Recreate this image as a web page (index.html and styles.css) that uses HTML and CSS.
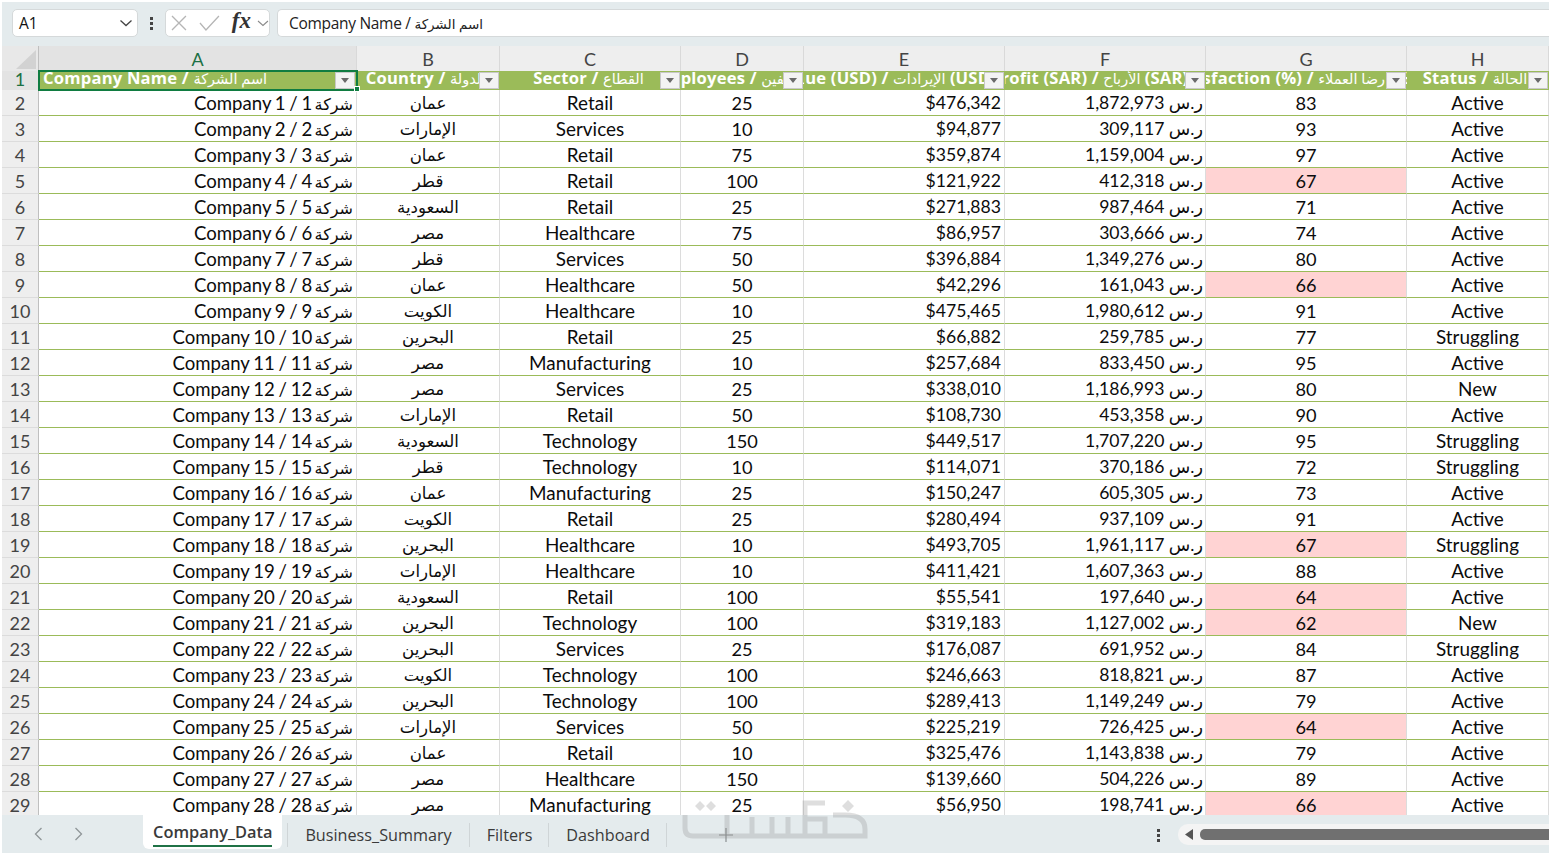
FILE: index.html
```html
<!DOCTYPE html>
<html lang="en">
<head>
<meta charset="utf-8">
<title>Company_Data</title>
<link rel="stylesheet" href="styles.css">
</head>
<body>
<div class="app">
  <div class="toolbar">
    <div class="namebox"><span>A1</span>
      <svg class="chev" width="14" height="8" viewBox="0 0 14 8"><path d="M1.500 1.500 7 6.500l5.500-5" fill="none" stroke="#444" stroke-width="1.300"/></svg>
    </div>
    <div class="vdots"><i></i><i></i><i></i></div>
    <div class="fnbox">
      <svg width="18" height="18" viewBox="0 0 18 18"><path d="M2 2l14 14M16 2 2 16" fill="none" stroke="#b5b5b5" stroke-width="1.300"/></svg>
      <svg width="22" height="18" viewBox="0 0 22 18"><path d="M2 9l6 7L21 2" fill="none" stroke="#b5b5b5" stroke-width="1.300"/></svg>
      <span class="fx">fx</span>
      <svg width="12" height="7" viewBox="0 0 12 7"><path d="M1 1l5 4.500 5-4.500" fill="none" stroke="#8a8a8a" stroke-width="1.100"/></svg>
    </div>
    <div class="formula">Company Name / <span class="far">اسم الشركة</span></div>
  </div>

  <div class="sheet">
    <table class="grid">
      <colgroup>
        <col class="c-h"><col class="c-a"><col class="c-b"><col class="c-c"><col class="c-d"><col class="c-e"><col class="c-f"><col class="c-g"><col class="c-h2">
      </colgroup>
      <thead>
        <tr class="letters">
          <th class="corner"><svg width="34" height="23" viewBox="0 0 34 23"><path d="M33 2v19H13z" fill="#d2d2d2"/></svg></th>
          <th class="on">A</th><th>B</th><th>C</th><th>D</th><th>E</th><th>F</th><th>G</th><th>H</th>
        </tr>
      </thead>
      <tbody>
        <tr class="hdr">
          <th>1</th>
          <td class="sel"><div class="hc left"><span>Company Name / <i>اسم الشركة</i></span></div><b class="filter"></b><b class="handle"></b></td>
          <td><div class="hc"><span class="nudge-b">Country / <i>الدولة</i></span></div><b class="filter"></b></td>
          <td><div class="hc"><span class="nudge-c">Sector / <i>القطاع</i></span></div><b class="filter"></b></td>
          <td><div class="hc"><span class="nudge-d">Employees / <i>عدد الموظفين</i></span></div><b class="filter"></b></td>
          <td><div class="hc"><span class="nudge-e">Revenue (USD) / <i>الإيرادات</i> (USD)</span></div><b class="filter"></b></td>
          <td><div class="hc"><span class="nudge-f">Profit (SAR) / <i>الأرباح</i> (SAR)</span></div><b class="filter"></b></td>
          <td><div class="hc"><span class="nudge-g">Customer Satisfaction (%) / <i>رضا العملاء</i> (%)</span></div><b class="filter"></b></td>
          <td><div class="hc"><span class="nudge-b">Status / <i>الحالة</i></span></div><b class="filter"></b></td>
        </tr>
        <tr><th>2</th><td class="r">Company 1 / <i>شركة</i> 1</td><td>عمان</td><td>Retail</td><td>25</td><td class="r">$476,342</td><td class="r">1,872,973 <i>ر.س</i></td><td>83</td><td>Active</td></tr>
        <tr><th>3</th><td class="r">Company 2 / <i>شركة</i> 2</td><td>الإمارات</td><td>Services</td><td>10</td><td class="r">$94,877</td><td class="r">309,117 <i>ر.س</i></td><td>93</td><td>Active</td></tr>
        <tr><th>4</th><td class="r">Company 3 / <i>شركة</i> 3</td><td>عمان</td><td>Retail</td><td>75</td><td class="r">$359,874</td><td class="r">1,159,004 <i>ر.س</i></td><td>97</td><td>Active</td></tr>
        <tr><th>5</th><td class="r">Company 4 / <i>شركة</i> 4</td><td>قطر</td><td>Retail</td><td>100</td><td class="r">$121,922</td><td class="r">412,318 <i>ر.س</i></td><td class="low">67</td><td>Active</td></tr>
        <tr><th>6</th><td class="r">Company 5 / <i>شركة</i> 5</td><td>السعودية</td><td>Retail</td><td>25</td><td class="r">$271,883</td><td class="r">987,464 <i>ر.س</i></td><td>71</td><td>Active</td></tr>
        <tr><th>7</th><td class="r">Company 6 / <i>شركة</i> 6</td><td>مصر</td><td>Healthcare</td><td>75</td><td class="r">$86,957</td><td class="r">303,666 <i>ر.س</i></td><td>74</td><td>Active</td></tr>
        <tr><th>8</th><td class="r">Company 7 / <i>شركة</i> 7</td><td>قطر</td><td>Services</td><td>50</td><td class="r">$396,884</td><td class="r">1,349,276 <i>ر.س</i></td><td>80</td><td>Active</td></tr>
        <tr><th>9</th><td class="r">Company 8 / <i>شركة</i> 8</td><td>عمان</td><td>Healthcare</td><td>50</td><td class="r">$42,296</td><td class="r">161,043 <i>ر.س</i></td><td class="low">66</td><td>Active</td></tr>
        <tr><th>10</th><td class="r">Company 9 / <i>شركة</i> 9</td><td>الكويت</td><td>Healthcare</td><td>10</td><td class="r">$475,465</td><td class="r">1,980,612 <i>ر.س</i></td><td>91</td><td>Active</td></tr>
        <tr><th>11</th><td class="r">Company 10 / <i>شركة</i> 10</td><td>البحرين</td><td>Retail</td><td>25</td><td class="r">$66,882</td><td class="r">259,785 <i>ر.س</i></td><td>77</td><td>Struggling</td></tr>
        <tr><th>12</th><td class="r">Company 11 / <i>شركة</i> 11</td><td>مصر</td><td>Manufacturing</td><td>10</td><td class="r">$257,684</td><td class="r">833,450 <i>ر.س</i></td><td>95</td><td>Active</td></tr>
        <tr><th>13</th><td class="r">Company 12 / <i>شركة</i> 12</td><td>مصر</td><td>Services</td><td>25</td><td class="r">$338,010</td><td class="r">1,186,993 <i>ر.س</i></td><td>80</td><td>New</td></tr>
        <tr><th>14</th><td class="r">Company 13 / <i>شركة</i> 13</td><td>الإمارات</td><td>Retail</td><td>50</td><td class="r">$108,730</td><td class="r">453,358 <i>ر.س</i></td><td>90</td><td>Active</td></tr>
        <tr><th>15</th><td class="r">Company 14 / <i>شركة</i> 14</td><td>السعودية</td><td>Technology</td><td>150</td><td class="r">$449,517</td><td class="r">1,707,220 <i>ر.س</i></td><td>95</td><td>Struggling</td></tr>
        <tr><th>16</th><td class="r">Company 15 / <i>شركة</i> 15</td><td>قطر</td><td>Technology</td><td>10</td><td class="r">$114,071</td><td class="r">370,186 <i>ر.س</i></td><td>72</td><td>Struggling</td></tr>
        <tr><th>17</th><td class="r">Company 16 / <i>شركة</i> 16</td><td>عمان</td><td>Manufacturing</td><td>25</td><td class="r">$150,247</td><td class="r">605,305 <i>ر.س</i></td><td>73</td><td>Active</td></tr>
        <tr><th>18</th><td class="r">Company 17 / <i>شركة</i> 17</td><td>الكويت</td><td>Retail</td><td>25</td><td class="r">$280,494</td><td class="r">937,109 <i>ر.س</i></td><td>91</td><td>Active</td></tr>
        <tr><th>19</th><td class="r">Company 18 / <i>شركة</i> 18</td><td>البحرين</td><td>Healthcare</td><td>10</td><td class="r">$493,705</td><td class="r">1,961,117 <i>ر.س</i></td><td class="low">67</td><td>Struggling</td></tr>
        <tr><th>20</th><td class="r">Company 19 / <i>شركة</i> 19</td><td>الإمارات</td><td>Healthcare</td><td>10</td><td class="r">$411,421</td><td class="r">1,607,363 <i>ر.س</i></td><td>88</td><td>Active</td></tr>
        <tr><th>21</th><td class="r">Company 20 / <i>شركة</i> 20</td><td>السعودية</td><td>Retail</td><td>100</td><td class="r">$55,541</td><td class="r">197,640 <i>ر.س</i></td><td class="low">64</td><td>Active</td></tr>
        <tr><th>22</th><td class="r">Company 21 / <i>شركة</i> 21</td><td>البحرين</td><td>Technology</td><td>100</td><td class="r">$319,183</td><td class="r">1,127,002 <i>ر.س</i></td><td class="low">62</td><td>New</td></tr>
        <tr><th>23</th><td class="r">Company 22 / <i>شركة</i> 22</td><td>البحرين</td><td>Services</td><td>25</td><td class="r">$176,087</td><td class="r">691,952 <i>ر.س</i></td><td>84</td><td>Struggling</td></tr>
        <tr><th>24</th><td class="r">Company 23 / <i>شركة</i> 23</td><td>الكويت</td><td>Technology</td><td>100</td><td class="r">$246,663</td><td class="r">818,821 <i>ر.س</i></td><td>87</td><td>Active</td></tr>
        <tr><th>25</th><td class="r">Company 24 / <i>شركة</i> 24</td><td>البحرين</td><td>Technology</td><td>100</td><td class="r">$289,413</td><td class="r">1,149,249 <i>ر.س</i></td><td>79</td><td>Active</td></tr>
        <tr><th>26</th><td class="r">Company 25 / <i>شركة</i> 25</td><td>الإمارات</td><td>Services</td><td>50</td><td class="r">$225,219</td><td class="r">726,425 <i>ر.س</i></td><td class="low">64</td><td>Active</td></tr>
        <tr><th>27</th><td class="r">Company 26 / <i>شركة</i> 26</td><td>عمان</td><td>Retail</td><td>10</td><td class="r">$325,476</td><td class="r">1,143,838 <i>ر.س</i></td><td>79</td><td>Active</td></tr>
        <tr><th>28</th><td class="r">Company 27 / <i>شركة</i> 27</td><td>مصر</td><td>Healthcare</td><td>150</td><td class="r">$139,660</td><td class="r">504,226 <i>ر.س</i></td><td>89</td><td>Active</td></tr>
        <tr><th>29</th><td class="r">Company 28 / <i>شركة</i> 28</td><td>مصر</td><td>Manufacturing</td><td>25</td><td class="r">$56,950</td><td class="r">198,741 <i>ر.س</i></td><td class="low">66</td><td>Active</td></tr>
      </tbody>
    </table>
  </div>

  <div class="tabbar">
    <div class="nav">
      <svg width="9" height="14" viewBox="0 0 9 14"><path d="M7.500 1 1.500 7l6 6" fill="none" stroke="#8f9698" stroke-width="1.300"/></svg>
      <svg width="9" height="14" viewBox="0 0 9 14"><path d="M1.500 1l6 6-6 6" fill="none" stroke="#8f9698" stroke-width="1.300"/></svg>
    </div>
    <div class="tab active"><span>Company_Data</span></div>
    <div class="tab first">Business_Summary</div>
    <div class="tab">Filters</div>
    <div class="tab">Dashboard</div>
    <div class="plus"><svg width="16" height="16" viewBox="0 0 16 16"><path d="M8 1v14M1 8h14" stroke="#8a8f91" stroke-width="1.200"/></svg></div>
    <div class="spacer"></div>
    <div class="vdots tabdots"><i></i><i></i><i></i></div>
    <div class="scroll">
      <svg width="9" height="11" viewBox="0 0 9 11"><path d="M8 0v11L0 5.500z" fill="#555"/></svg>
      <div class="thumb"></div>
    </div>
  </div>

  <svg class="mark" width="205" height="50" viewBox="0 0 205 50">
    <path d="M25 6l5 5-5 5-5-5zM36 6l5 5-5 5-5-5zM173 5l6 6-6 6-6-6z" fill="#8d8d8d"/>
    <path d="M10 20v13q0 8 8 8h172v-7q0-14-20-14h-12M52 20v21M77 22v19M97 22v19M113 22v19M130 41V8h20M130 24h20v17" fill="none" stroke="#8d8d8d" stroke-width="5"/>
  </svg>
</div>
</body>
</html>
```

FILE: styles.css
```css
* { box-sizing: border-box; }
html, body { margin: 0; height: 100%; background: #fff; overflow: hidden; }
body { padding: 2px 3px 2px 2px; font-family: Lato, "DejaVu Sans", sans-serif; }
i { font-style: normal; }

.app { position: relative; display: flex; flex-direction: column; height: 851px; width: 1547px; overflow: hidden; background: #e4ebed; }

.toolbar { flex: 0 0 44px; display: flex; align-items: flex-start; padding: 7px 0 0 10px; background: #e4ebed; }
.namebox { width: 126px; height: 28px; background: #fff; border: 1px solid #d5d9da; border-radius: 5px; display: flex; align-items: center; justify-content: space-between; padding: 0 4px 0 6px; font: 15.5px "Open Sans", sans-serif; color: #111; }
.vdots { display: flex; flex-direction: column; gap: 2px; margin: 8px 12px 0; }
.vdots i { display: block; width: 3px; height: 3px; background: #444; }
.fnbox { width: 105px; height: 28px; background: #fff; border: 1px solid #d5d9da; border-radius: 5px; display: flex; align-items: center; padding: 0 0 0 4px; gap: 10px; }
.fx { font: italic bold 23px "Liberation Serif", serif; color: #333; margin: -5px -4px 0 2px; }
.formula { flex: 1; height: 28px; margin-left: 7px; background: #fff; border: 1px solid #d5d9da; border-right: 0; border-radius: 5px 0 0 5px; padding-left: 11px; font: 15.5px/26px "Open Sans", "DejaVu Sans", sans-serif; letter-spacing: -.3px; color: #222; white-space: nowrap; }
.far { font-size: 13.5px; letter-spacing: 0; }

.sheet { flex: 1; min-height: 0; overflow: hidden; background: #fff; }
.grid { border-collapse: separate; border-spacing: 0; table-layout: fixed; width: 1547px; font-size: 18.9px; color: #0c0c0c; }
.c-h { width: 37px; } .c-a { width: 318px; } .c-b { width: 143px; } .c-c { width: 181px; } .c-d { width: 123px; }
.c-e { width: 201px; } .c-f { width: 201px; } .c-g { width: 201px; } .c-h2 { width: 142px; }

.letters th { height: 25px; padding: 2px 0 0; background: #eeeeee; border-right: 1px solid #d9d9d9; font-weight: 400; font-size: 18px; line-height: 21px; color: #444; }
.letters th.on { background: #e3e3e3; color: #1c7044; }
.letters th.corner { padding: 0; background: #e8e8e8; border-right: 1px solid #bfbfbf; vertical-align: bottom; line-height: 0; }

tbody th { padding: 0; background: #eeeeee; border-right: 1px solid #bfbfbf; border-bottom: 1px solid #dcdcdc; font-weight: 400; font-size: 18px; color: #444; text-align: center; }
tbody td { height: 26px; padding: 0 4px; text-align: center; white-space: nowrap; overflow: hidden; border-right: 1px solid #dcdcdc; border-bottom: 1px solid #9bbb59; line-height: 24px; }
tbody td.r { text-align: right; padding-right: 3px; }
tbody td.low { background: #ffd3d3; }
tbody td i { line-height: 0; }
tbody td:nth-child(2) { padding-right: 3px; font-size: 18.6px; word-spacing: -1px; }
tbody td:nth-child(2) i { font-size: 16px; margin-left: -1.500px; }
tbody td:nth-child(3) { font-size: 16.6px; }
tbody td:nth-child(5), tbody td:nth-child(8) { font-size: 18.2px; }
tbody td:nth-child(6), tbody td:nth-child(7) { font-size: 17.6px; line-height: 25px; }
tbody td:nth-child(7) { padding-right: 2px; }

.hdr th { height: 19px; padding-bottom: 2px; background: #e3e3e3; color: #1c7044; border-bottom: 0; line-height: 15px; }
.hdr td, .hdr td:nth-child(n) { position: relative; height: 19px; padding: 0; background: #9bbb59; border: 0; overflow: visible; font-size: 16px; word-spacing: 0; }
.hc { display: flex; justify-content: center; height: 19px; overflow: hidden; padding: 0 1px; color: #fff; font: 700 16.6px/13px "Open Sans", "DejaVu Sans", sans-serif; letter-spacing: .2px; }
.hc span { flex: none; white-space: nowrap; }
.hdr td .hc i, .hdr td:nth-child(2) .hc i { font-weight: 400; font-size: 14.5px; letter-spacing: 0; margin: 0; line-height: inherit; }
.hc.left { justify-content: flex-start; padding-left: 3px; }
.nudge-b { margin-right: 6px; }
.nudge-c { margin-right: 4px; }
.nudge-d { margin-left: 16px; }
.nudge-e { margin-right: 60px; }
.nudge-f { margin-right: 32px; }
.nudge-g { margin-right: 114px; }
.filter { position: absolute; top: 1px; right: 1px; width: 20px; height: 17px; background: #f3f3f3; border: 1px solid #c8c8c8; }
.filter::after { content: ""; position: absolute; left: 5px; top: 5px; border: 4px solid transparent; border-top: 5px solid #6a6a6a; border-bottom: 0; }
.sel { outline: 2px solid #107c41; outline-offset: -1px; z-index: 1; }
.sel .hc { height: 18px; margin: 1px 1px 0; border-bottom: 1px solid #fff; line-height: 11px; }
.sel .filter { right: 2px; top: 1px; }
.handle { position: absolute; right: -3px; bottom: -2px; width: 6px; height: 6px; background: #107c41; border: 1px solid #fff; z-index: 2; }

.tabbar { flex: 0 0 38px; display: flex; align-items: flex-start; background: #e4ebed; font: 16.2px "Open Sans", sans-serif; color: #3a3a3a; position: relative; }
.nav { width: 141px; display: flex; gap: 31px; padding: 12px 0 0 32px; }
.tab { height: 24px; margin-top: 8px; padding: 0 16px 0 17px; border-left: 1px solid #cfd5d7; line-height: 24px; }
.tab.first { margin-left: 5px; padding-right: 17px; }
.tab.active { height: 34px; margin-top: 0; padding: 0 10px; background: #fff; border: 0; border-radius: 0 0 6px 6px; font-weight: 600; font-size: 16.4px; line-height: 34px; }
.tab.active span { display: block; height: 32px; border-bottom: 2px solid #1f7246; line-height: 34px; }
.plus { height: 24px; margin-top: 8px; padding: 3px 0 0 51px; border-left: 1px solid #cfd5d7; }
.spacer { flex: 1; }
.tabdots { margin: 14px 18px 0 0; }
.scroll { width: 371px; height: 21px; margin-top: 9px; background: #f4f4f4; border-radius: 10px 0 0 10px; display: flex; align-items: center; gap: 6px; padding-left: 7px; }
.thumb { flex: 1; height: 11px; background: #707070; border-radius: 5px 0 0 5px; }

.mark { position: absolute; left: 673px; top: 793px; opacity: .28; pointer-events: none; }
```
